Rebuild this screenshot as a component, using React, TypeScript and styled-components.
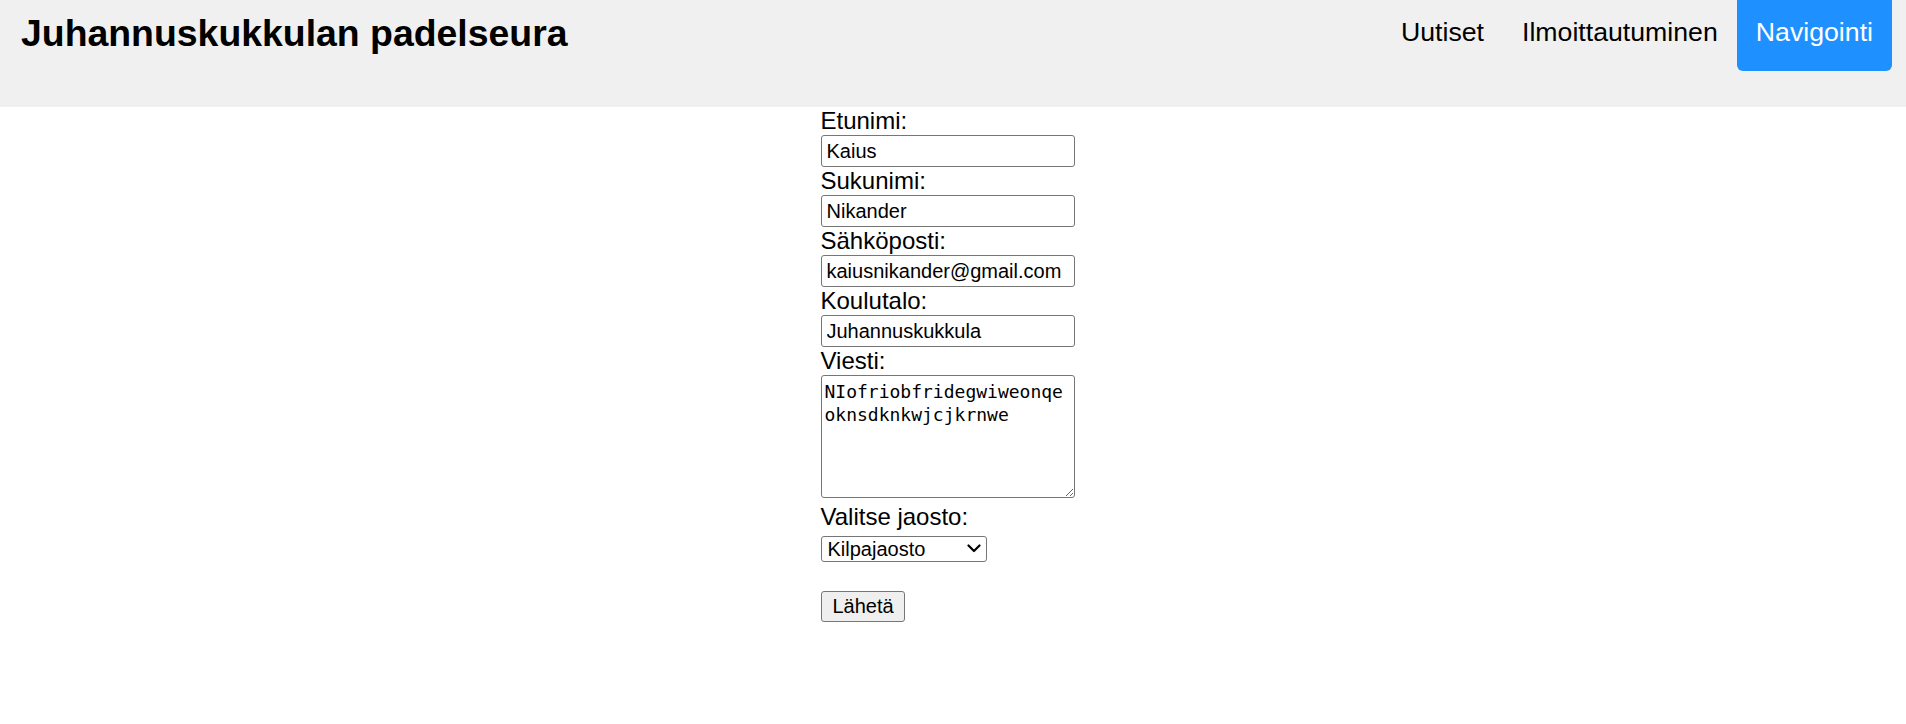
import React from "react";
import styled, { createGlobalStyle } from "styled-components";

const GlobalStyle = createGlobalStyle`
  html, body {
    margin: 0;
    padding: 0;
    background: #ffffff;
    font-family: "Liberation Sans", Arial, sans-serif;
    color: #000000;
  }
  * { box-sizing: border-box; }
`;

const Header = styled.header`
  display: flex;
  justify-content: space-between;
  align-items: flex-start;
  height: 107px;
  padding: 0 14px 0 21px;
  background: #f0f0f0;
`;

const Title = styled.h1`
  margin: 12px 0 0;
  font-size: 37.4px;
  font-weight: 700;
  line-height: normal;
`;

const Nav = styled.nav`
  display: flex;
  align-items: flex-start;
`;

const NavLink = styled.a<{ $active?: boolean }>`
  display: block;
  padding: 17px 19px 23px;
  font-size: 26.7px;
  line-height: 31px;
  text-decoration: none;
  color: ${(p) => (p.$active ? "#ffffff" : "#000000")};
  background: ${(p) => (p.$active ? "#1e90ff" : "transparent")};
  border-radius: ${(p) => (p.$active ? "0 0 6px 6px" : "0")};
  cursor: pointer;
`;

const Form = styled.form`
  display: flex;
  flex-direction: column;
  align-items: flex-start;
  width: 265px;
  margin: 0 auto;
`;

const Label = styled.label`
  display: block;
  font-size: 24px;
  line-height: 28px;
`;

const TextInput = styled.input`
  display: block;
  width: 254px;
  height: 32px;
  margin: 0;
  padding: 0 5px;
  border: 1px solid #767676;
  border-radius: 3px;
  background: #ffffff;
  font-family: "Liberation Sans", Arial, sans-serif;
  font-size: 20px;
  color: #000000;
`;

const Message = styled.textarea`
  display: block;
  width: 254px;
  height: 123px;
  margin: 0 0 5px;
  padding: 5px 3px 2px;
  border: 1px solid #767676;
  border-radius: 3px;
  background: #ffffff;
  font-family: "DejaVu Sans Mono", "Liberation Mono", monospace;
  font-size: 18px;
  line-height: 22.7px;
  color: #000000;
  resize: both;
`;

const SelectWrap = styled.div`
  position: relative;
  width: 166px;
  height: 26px;
  margin: 5px 0 0;
`;

const Select = styled.select`
  display: block;
  width: 100%;
  height: 100%;
  margin: 0;
  padding: 0 24px 0 6px;
  border: 1px solid #767676;
  border-radius: 3px;
  background: #ffffff;
  appearance: none;
  -webkit-appearance: none;
  font-family: "Liberation Sans", Arial, sans-serif;
  font-size: 20px;
  color: #000000;
`;

const Chevron = styled.svg`
  position: absolute;
  right: 6px;
  top: 8px;
  width: 14px;
  height: 9px;
  pointer-events: none;
`;

const SubmitButton = styled.button`
  display: block;
  width: 84px;
  height: 31px;
  margin: 28.5px 0 0;
  padding: 0 11px;
  border: 1px solid #767676;
  border-radius: 3px;
  background: #efefef;
  font-family: "Liberation Sans", Arial, sans-serif;
  font-size: 20px;
  color: #000000;
`;

export default function App() {
  return (
    <>
      <GlobalStyle />
      <Header>
        <Title>Juhannuskukkulan padelseura</Title>
        <Nav>
          <NavLink>Uutiset</NavLink>
          <NavLink>Ilmoittautuminen</NavLink>
          <NavLink $active>Navigointi</NavLink>
        </Nav>
      </Header>
      <Form onSubmit={(e) => e.preventDefault()}>
        <Label htmlFor="etunimi">Etunimi:</Label>
        <TextInput id="etunimi" type="text" defaultValue="Kaius" />
        <Label htmlFor="sukunimi">Sukunimi:</Label>
        <TextInput id="sukunimi" type="text" defaultValue="Nikander" />
        <Label htmlFor="sahkoposti">Sähköposti:</Label>
        <TextInput id="sahkoposti" type="email" defaultValue="kaiusnikander@gmail.com" />
        <Label htmlFor="koulutalo">Koulutalo:</Label>
        <TextInput id="koulutalo" type="text" defaultValue="Juhannuskukkula" />
        <Label htmlFor="viesti">Viesti:</Label>
        <Message id="viesti" defaultValue="NIofriobfridegwiweonqeoknsdknkwjcjkrnwe" />
        <Label htmlFor="jaosto">Valitse jaosto:</Label>
        <SelectWrap>
          <Select id="jaosto" defaultValue="Kilpajaosto">
            <option>Kilpajaosto</option>
            <option>Harrastejaosto</option>
            <option>Junioreiden jaosto</option>
          </Select>
          <Chevron viewBox="0 0 14 9" aria-hidden="true">
            <path d="M1.5 1.5 L7 7 L12.5 1.5" fill="none" stroke="#000" strokeWidth="2.2" strokeLinecap="round" strokeLinejoin="round" />
          </Chevron>
        </SelectWrap>
        <SubmitButton type="submit">Lähetä</SubmitButton>
      </Form>
    </>
  );
}
